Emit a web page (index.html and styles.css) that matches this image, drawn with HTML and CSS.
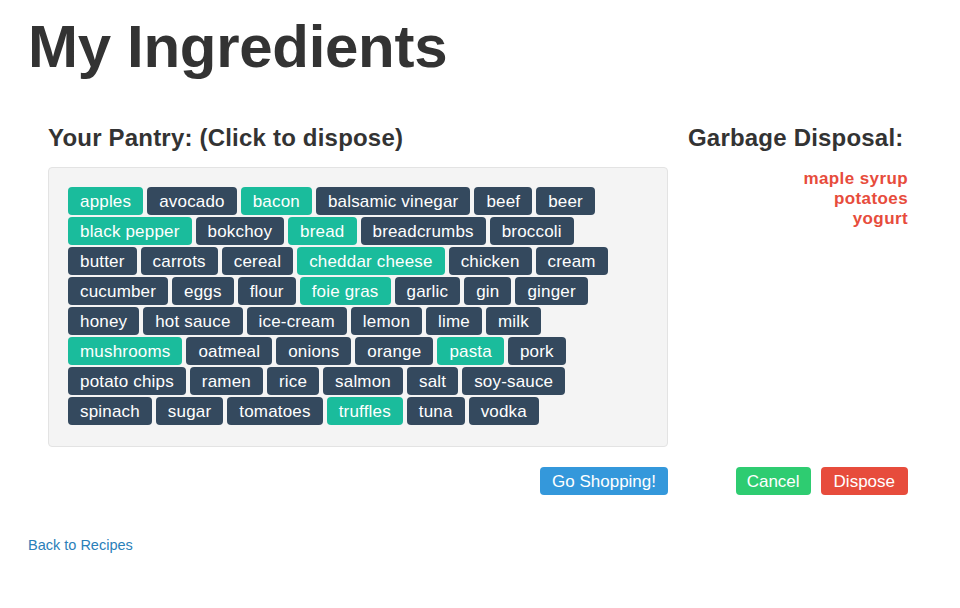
FILE: index.html
```html
<!DOCTYPE html>
<html lang="en">
<head>
<meta charset="utf-8">
<title>My Ingredients</title>
<link rel="stylesheet" href="styles.css">
</head>
<body>
<div class="page">
  <h1 class="title">My Ingredients</h1>
  <div class="board">
    <h2 class="heading">Your Pantry: (Click to dispose)</h2>
    <h2 class="heading">Garbage Disposal:</h2>
    <div class="well">
      <div class="tag-row">
        <span class="tag tag-on">apples</span>
        <span class="tag">avocado</span>
        <span class="tag tag-on">bacon</span>
        <span class="tag">balsamic vinegar</span>
        <span class="tag">beef</span>
        <span class="tag">beer</span>
      </div>
      <div class="tag-row">
        <span class="tag tag-on">black pepper</span>
        <span class="tag">bokchoy</span>
        <span class="tag tag-on">bread</span>
        <span class="tag">breadcrumbs</span>
        <span class="tag">broccoli</span>
      </div>
      <div class="tag-row">
        <span class="tag">butter</span>
        <span class="tag">carrots</span>
        <span class="tag">cereal</span>
        <span class="tag tag-on">cheddar cheese</span>
        <span class="tag">chicken</span>
        <span class="tag">cream</span>
      </div>
      <div class="tag-row">
        <span class="tag">cucumber</span>
        <span class="tag">eggs</span>
        <span class="tag">flour</span>
        <span class="tag tag-on">foie gras</span>
        <span class="tag">garlic</span>
        <span class="tag">gin</span>
        <span class="tag">ginger</span>
      </div>
      <div class="tag-row">
        <span class="tag">honey</span>
        <span class="tag">hot sauce</span>
        <span class="tag">ice-cream</span>
        <span class="tag">lemon</span>
        <span class="tag">lime</span>
        <span class="tag">milk</span>
      </div>
      <div class="tag-row">
        <span class="tag tag-on">mushrooms</span>
        <span class="tag">oatmeal</span>
        <span class="tag">onions</span>
        <span class="tag">orange</span>
        <span class="tag tag-on">pasta</span>
        <span class="tag">pork</span>
      </div>
      <div class="tag-row">
        <span class="tag">potato chips</span>
        <span class="tag">ramen</span>
        <span class="tag">rice</span>
        <span class="tag">salmon</span>
        <span class="tag">salt</span>
        <span class="tag">soy-sauce</span>
      </div>
      <div class="tag-row">
        <span class="tag">spinach</span>
        <span class="tag">sugar</span>
        <span class="tag">tomatoes</span>
        <span class="tag tag-on">truffles</span>
        <span class="tag">tuna</span>
        <span class="tag">vodka</span>
      </div>
    </div>
    <ul class="garbage">
      <li>maple syrup</li>
      <li>potatoes</li>
      <li>yogurt</li>
    </ul>
    <div class="actions">
      <button class="btn btn-blue">Go Shopping!</button>
    </div>
    <div class="actions">
      <button class="btn btn-green">Cancel</button>
      <button class="btn btn-red">Dispose</button>
    </div>
  </div>
  <a class="back" href="#">Back to Recipes</a>
</div>
</body>
</html>
```

FILE: styles.css
```css
html, body {
  margin: 0;
  padding: 0;
  background: #ffffff;
}

body {
  font-family: "Liberation Sans", Arial, Helvetica, sans-serif;
  color: #333333;
}

.page {
  padding: 14px 0 0 28px;
}

.title {
  margin: 0;
  font-size: 60px;
  line-height: 66px;
  font-weight: bold;
  color: #333333;
  letter-spacing: -0.3px;
}

.board {
  margin: 43px 0 0 20px;
  display: grid;
  grid-template-columns: 620px 220px;
  column-gap: 20px;
  row-gap: 0;
}

.heading {
  margin: 0 0 14px;
  font-size: 24px;
  line-height: 30px;
  font-weight: bold;
  color: #333333;
  letter-spacing: 0.2px;
}

.well {
  display: flex;
  flex-direction: column;
  gap: 2px;
  padding: 19px 19px 21px;
  margin-bottom: 20px;
  background: #f4f4f4;
  border: 1px solid #e3e3e3;
  border-radius: 4px;
}

.tag-row {
  display: flex;
  gap: 4px;
}

.tag {
  display: inline-block;
  box-sizing: border-box;
  height: 28px;
  line-height: 27px;
  padding: 1px 12px 0;
  font-size: 17px;
  letter-spacing: 0.18px;
  color: #ffffff;
  background: #34495e;
  border-radius: 4px;
  white-space: nowrap;
  cursor: pointer;
}

.tag-on {
  background: #1abc9c;
}

.garbage {
  list-style: none;
  margin: 0;
  padding: 2px 0 0;
  text-align: right;
}

.garbage li {
  font-size: 17px;
  line-height: 20px;
  font-weight: bold;
  letter-spacing: 0.4px;
  color: #e74c3c;
}

.actions {
  display: flex;
  justify-content: flex-end;
  gap: 10px;
}

.btn {
  box-sizing: border-box;
  border: none;
  margin: 0;
  height: 28px;
  line-height: 27px;
  padding: 1px 12px 0;
  font-family: "Liberation Sans", Arial, Helvetica, sans-serif;
  font-size: 17px;
  color: #ffffff;
  border-radius: 4px;
  cursor: pointer;
}

.btn-blue {
  background: #3498db;
}

.btn-green {
  background: #2ecc71;
  padding: 1px 11px 0;
}

.btn-red {
  background: #e74c3c;
  padding: 1px 13px 0;
}

.back {
  display: inline-block;
  margin-top: 40px;
  font-size: 14.5px;
  line-height: 20px;
  color: #2a80b9;
  text-decoration: none;
}
```
